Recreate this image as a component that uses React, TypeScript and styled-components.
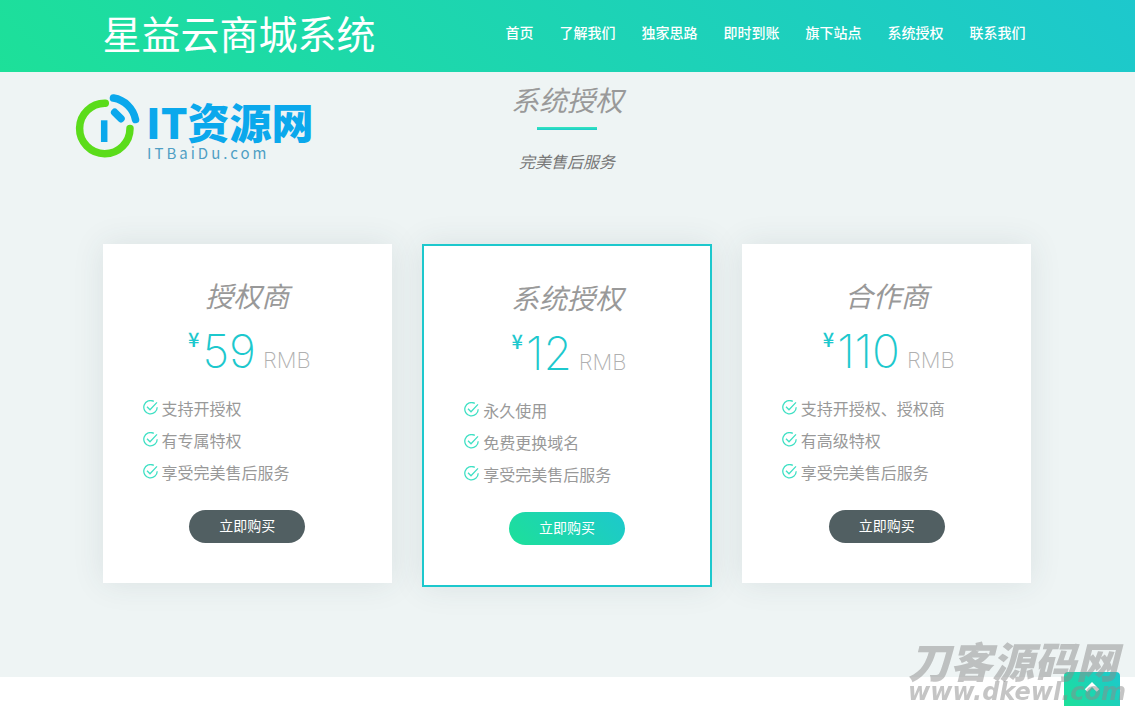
import React from "react";
import styled, { createGlobalStyle } from "styled-components";

const cjk = `"Noto Sans CJK SC", sans-serif`;

const GlobalStyle = createGlobalStyle`
  *, *::before, *::after { box-sizing: border-box; }
  html, body { height: 100%; }
  body {
    margin: 0;
    background: #fff;
    color: #999;
    font-family: "Noto Sans CJK SC", sans-serif;
    font-size: 16px;
    line-height: 24px;
    overflow: hidden;
  }
`;

const Page = styled.div`
  position: relative;
  overflow: hidden;
  padding-right: 1px;
`;

const Container = styled.div`
  width: 100%;
  max-width: 960px;
  margin: 0 auto;
  padding: 0 16px 0 15px;
`;

const Header = styled.header`
  background: linear-gradient(45deg, #1de099, #1dc8cd);
`;

const HeaderRow = styled(Container)`
  display: flex;
  align-items: center;
  justify-content: space-between;
  min-height: 72px;
`;

const Brand = styled.a`
  color: #fff;
  font-size: 39px;
  line-height: 64px;
  padding-bottom: 8px;
  text-decoration: none;
  white-space: nowrap;
`;

const Nav = styled.nav`
  display: flex;
  gap: 26px;
  padding: 0 6px 8px 0;
`;

const NavLink = styled.a`
  color: #fff;
  font-size: 14px;
  font-weight: 500;
  text-decoration: none;
  white-space: nowrap;
`;

const Section = styled.section`
  background: #eef4f4;
  padding: 7px 0 90px;
`;

const Heading = styled.div`
  display: flex;
  flex-direction: column;
  align-items: center;
  margin-bottom: 71px;
`;

const Title = styled.h2`
  margin: 0;
  color: #999;
  font-size: 28px;
  font-style: italic;
  font-weight: 400;
  line-height: 40px;
  text-align: center;
`;

const Rule = styled.span`
  width: 60px;
  height: 3px;
  margin: 8px 0 19px;
  background: linear-gradient(#35e8bb, #1dc8cd);
`;

const Subtitle = styled.p`
  margin: 0;
  color: #777;
  font-style: italic;
`;

const Plans = styled.div`
  display: grid;
  grid-template-columns: repeat(3, 1fr);
  align-items: start;
  gap: 30px;
`;

const Card = styled.article<{ $featured?: boolean }>`
  display: flex;
  flex-direction: column;
  align-items: center;
  padding: 31px 40px 40px;
  background: #fff;
  border: ${(p) => (p.$featured ? "2px solid #1dc8cd" : "0")};
  box-shadow: 0 0 30px rgba(50, 70, 80, 0.1);
`;

const Price = styled.p`
  display: flex;
  align-items: baseline;
  margin: 4px 0 0;
  padding-left: 4px;
  color: #1dc8cd;
  font-family: Inter, "Noto Sans CJK SC", sans-serif;
  font-size: 46px;
  font-weight: 200;
  line-height: 64px;
`;

const Currency = styled.span`
  align-self: flex-start;
  margin-right: 3px;
  font-family: ${cjk};
  font-size: 20px;
  font-weight: 500;
  line-height: 40px;
`;

const Unit = styled.span`
  margin-left: 7px;
  color: #b0b0b0;
  font-size: 22px;
  font-weight: 200;
`;

const Features = styled.ul`
  align-self: stretch;
  margin: 0 0 22px;
  padding: 0;
  list-style: none;
`;

const Feature = styled.li`
  display: flex;
  align-items: center;
  gap: 4px;
  line-height: 32px;
  white-space: nowrap;
`;

const CheckSvg = styled.svg`
  flex: none;
  width: 15px;
  height: 15px;
  margin-bottom: 2px;
`;

const BuyButton = styled.button<{ $featured?: boolean }>`
  padding: 0 30px 2px;
  border: 0;
  border-radius: 17px;
  background: ${(p) =>
    p.$featured ? "linear-gradient(45deg, #1de099, #1dc8cd)" : "#515f62"};
  color: #fff;
  font-family: ${cjk};
  font-size: 14px;
  line-height: 31px;
  cursor: pointer;
`;

const Logo = styled.div`
  position: absolute;
  top: 94px;
  left: 75px;
  display: flex;
  gap: 6px;
  color: #0aa8ec;
`;

const LogoSvg = styled.svg`
  flex: none;
  width: 65px;
  height: 66px;
`;

const LogoText = styled.div`
  display: flex;
  flex-direction: column;
`;

const LogoName = styled.span`
  font-size: 42px;
  font-weight: 900;
  line-height: 48px;
  margin-top: 3px;
  white-space: nowrap;
`;

const LogoDomain = styled.span`
  color: #4f9fc4;
  font-size: 15px;
  line-height: 16px;
  letter-spacing: 3px;
  margin-left: 1px;
`;

const ToTop = styled.button`
  position: fixed;
  right: 16px;
  bottom: 0;
  display: flex;
  justify-content: center;
  width: 56px;
  height: 34px;
  padding: 8px 0 0;
  border: 0;
  border-radius: 4px 4px 0 0;
  background: linear-gradient(45deg, #1de099, #1dc8cd);
  cursor: pointer;
`;

const Watermark = styled.div`
  position: fixed;
  right: 10px;
  bottom: 0;
  color: rgba(140, 140, 140, 0.5);
  font-style: italic;
  pointer-events: none;
  white-space: nowrap;
`;

const WatermarkName = styled.div`
  font-size: 42px;
  font-weight: 900;
  line-height: 36px;
`;

const WatermarkUrl = styled.div`
  font-family: "DejaVu Sans", sans-serif;
  font-size: 24px;
  font-weight: 700;
  line-height: 28px;
`;

const navItems = ["首页", "了解我们", "独家思路", "即时到账", "旗下站点", "系统授权", "联系我们"];

const plans = [
  { name: "授权商", price: "59", features: ["支持开授权", "有专属特权", "享受完美售后服务"] },
  { name: "系统授权", price: "12", features: ["永久使用", "免费更换域名", "享受完美售后服务"], featured: true },
  { name: "合作商", price: "110", features: ["支持开授权、授权商", "有高级特权", "享受完美售后服务"] },
];

function CheckIcon() {
  return (
    <CheckSvg viewBox="0 0 15 15" fill="none" stroke="#3fe0c4" strokeWidth="1.3" aria-hidden="true">
      <path d="M10.8 1.4A6.7 6.7 0 1 0 14.2 7.2" />
      <path d="M4 6.8l3 3L14 2.4" />
    </CheckSvg>
  );
}

export default function App() {
  return (
    <Page>
      <GlobalStyle />
      <Header>
        <HeaderRow>
          <Brand href="#">星益云商城系统</Brand>
          <Nav>
            {navItems.map((item) => (
              <NavLink href="#" key={item}>{item}</NavLink>
            ))}
          </Nav>
        </HeaderRow>
      </Header>
      <Section>
        <Container>
          <Heading>
            <Title>系统授权</Title>
            <Rule />
            <Subtitle>完美售后服务</Subtitle>
          </Heading>
          <Plans>
            {plans.map((plan) => (
              <Card key={plan.name} $featured={plan.featured}>
                <Title as="h3">{plan.name}</Title>
                <Price>
                  <Currency>¥</Currency>
                  {plan.price}
                  <Unit>RMB</Unit>
                </Price>
                <Features>
                  {plan.features.map((f) => (
                    <Feature key={f}><CheckIcon />{f}</Feature>
                  ))}
                </Features>
                <BuyButton $featured={plan.featured}>立即购买</BuyButton>
              </Card>
            ))}
          </Plans>
        </Container>
      </Section>
      <Logo>
        <LogoSvg viewBox="0 0 65 66" fill="none" strokeLinecap="round" aria-hidden="true">
          <path d="M30.300 9.300A25.200 25.200 0 1 0 55 34.500" stroke="#5bdc1a" strokeWidth="7.500" />
          <path d="M38.500 4A27 27 0 0 1 60.500 25.500" stroke="#0aa8ec" strokeWidth="7.500" />
          <path d="M39.700 18.300L46 24.700" stroke="#0aa8ec" strokeWidth="7.500" />
          <path d="M29.200 26.300V48" stroke="#0aa8ec" strokeWidth="6.500" strokeLinecap="butt" />
        </LogoSvg>
        <LogoText>
          <LogoName>IT资源网</LogoName>
          <LogoDomain>ITBaiDu.com</LogoDomain>
        </LogoText>
      </Logo>
      <ToTop aria-label="返回顶部">
        <svg width="16" height="14" viewBox="0 0 16 14" fill="none" stroke="#fff" strokeWidth="3.500" aria-hidden="true">
          <path d="M2 10.500L8 4.500L14 10.500" />
        </svg>
      </ToTop>
      <Watermark>
        <WatermarkName>刀客源码网</WatermarkName>
        <WatermarkUrl>www.dkewl.com</WatermarkUrl>
      </Watermark>
    </Page>
  );
}
